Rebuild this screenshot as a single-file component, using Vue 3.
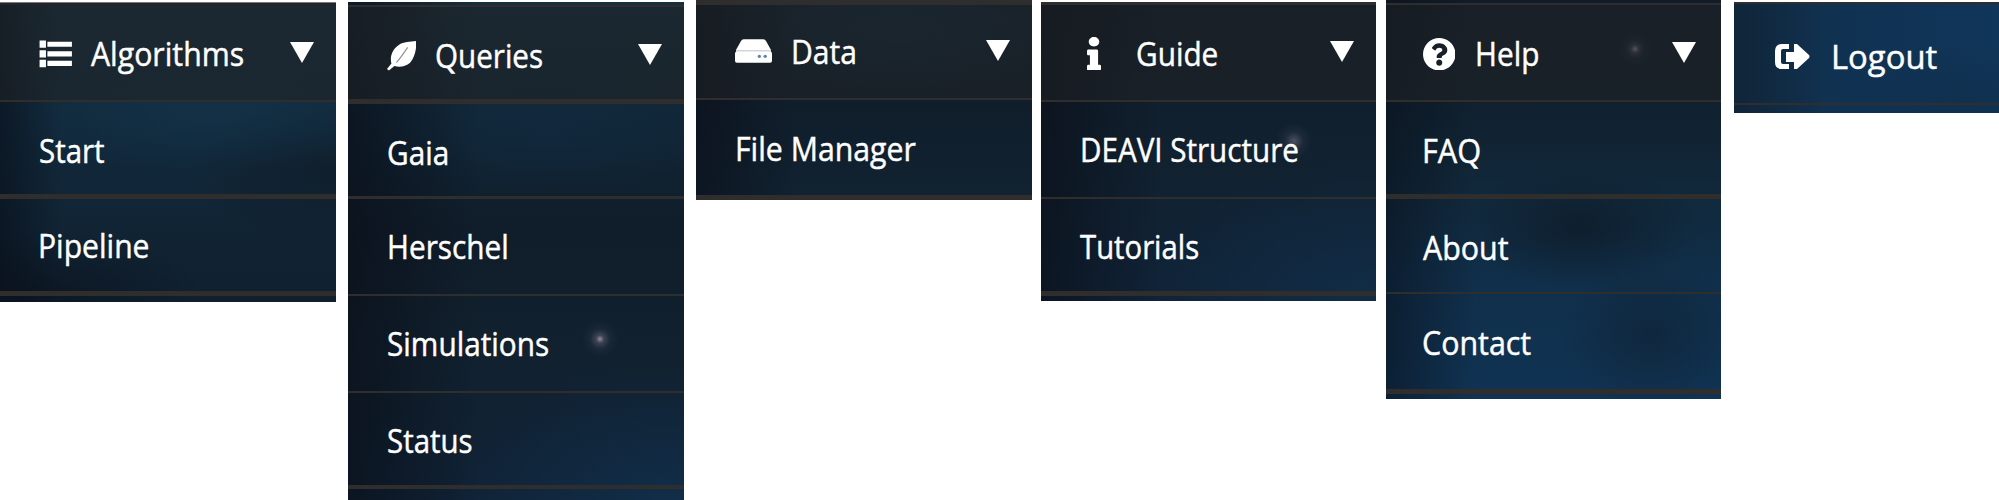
<script setup>
const BASELINE = 33.5

const menus = [
  {
    id: 'algorithms', left: 0, top: 2, width: 336, cap: 3, tail: 6, icon: 'list', iconX: 38.5, iconY: 37.5, iconW: 33, iconH: 28, arrowX: 290, arrowY: 40,
    rows: [
      { text: 'Algorithms', x: 91, base: 60.7, h: 94.5, line: 2.5, sx: 0.945 },
      { text: 'Start', x: 39, base: 60.3, h: 92, line: 5, sx: 0.92 },
      { text: 'Pipeline', x: 38.3, base: 58.5, h: 92, line: 5, sx: 0.94 }
    ]
  },
  {
    id: 'queries', left: 348, top: 2, width: 336, lead: 3, cap: 2, tail: 11, icon: 'leaf', iconX: 38.5, iconY: 39, iconW: 29.5, iconH: 29.5, arrowX: 290, arrowY: 42,
    rows: [
      { text: 'Queries', x: 87, base: 60.5, h: 92, line: 5, sx: 0.925 },
      { text: 'Gaia', x: 38.8, base: 60.3, h: 91.5, line: 3, sx: 0.93 },
      { text: 'Herschel', x: 38.5, base: 60.3, h: 94.5, line: 2.5, sx: 0.93 },
      { text: 'Simulations', x: 38.7, base: 60.3, h: 94.5, line: 2.5, sx: 0.93 },
      { text: 'Status', x: 38.8, base: 60.3, h: 92, line: 4.5, sx: 0.92 }
    ]
  },
  {
    id: 'data', left: 696, top: 0, width: 336, cap: 5, tail: 0, icon: 'disk', iconX: 39, iconY: 39, iconW: 37, iconH: 24, arrowX: 290, arrowY: 40,
    rows: [
      { text: 'Data', x: 94.8, base: 58.3, h: 92, line: 2.5, sx: 0.94 },
      { text: 'File Manager', x: 39, base: 61, h: 95, line: 5.5, sx: 0.945 }
    ]
  },
  {
    id: 'guide', left: 1041, top: 2, width: 335, cap: 2.5, tail: 5.5, icon: 'info', iconX: 46, iconY: 34.5, iconW: 14, iconH: 33.5, arrowX: 289, arrowY: 39,
    rows: [
      { text: 'Guide', x: 95, base: 60.5, h: 94.5, line: 2.5, sx: 0.93 },
      { text: 'DEAVI Structure', x: 38.9, base: 60.4, h: 94.5, line: 2.5, sx: 0.925 },
      { text: 'Tutorials', x: 39.3, base: 60.3, h: 92, line: 5, sx: 0.915 }
    ]
  },
  {
    id: 'help', left: 1386, top: 0, width: 335, lead: 3, cap: 2, tail: 5, icon: 'question', iconX: 36.5, iconY: 37.5, iconW: 32.5, iconH: 32.5, arrowX: 286, arrowY: 42,
    rows: [
      { text: 'Help', x: 88.8, base: 60.8, h: 94.5, line: 2.5, sx: 0.93 },
      { text: 'FAQ', x: 36, base: 60.8, h: 92, line: 5, sx: 0.96 },
      { text: 'About', x: 37, base: 60.4, h: 92.5, line: 2.5, sx: 0.95 },
      { text: 'Contact', x: 35.8, base: 60.2, h: 95, line: 5, sx: 0.95 }
    ]
  },
  {
    id: 'logout', left: 1734, top: 2, width: 265, cap: 2, tail: 8.5, icon: 'exit', iconX: 41, iconY: 42, iconW: 35, iconH: 25,
    rows: [{ text: 'Logout', x: 96.7, base: 64.7, h: 98, line: 2.5, sx: 1.025 }]
  }
]

const px = (n) => `${n}px`
const gapBefore = (i) => (i ? menus[i].left - menus[i - 1].left - menus[i - 1].width : 0)
</script>

<template>
  <div class="menus">
    <nav
      v-for="(m, i) in menus"
      :key="m.id"
      class="menu"
      :class="m.id"
      :style="{ width: px(m.width), marginTop: px(m.top), marginLeft: px(gapBefore(i)) }"
    >
      <div v-if="m.lead" :style="{ height: px(m.lead) }"></div>
      <div class="cap" :style="{ height: px(m.cap) }"></div>
      <div
        v-for="(r, n) in m.rows"
        :key="r.text"
        class="row"
        :class="{ head: n === 0 && m.arrowX }"
        :style="{ height: px(r.h + r.line), borderBottomWidth: px(r.line), paddingTop: px(r.base - BASELINE), paddingLeft: px(r.x) }"
      >
        <span class="label" :style="{ transform: `scaleX(${r.sx})` }">{{ r.text }}</span>
      </div>
      <div :style="{ height: px(m.tail) }"></div>

      <svg v-if="m.icon === 'list'" class="icon" :style="{ left: px(m.iconX), top: px(m.iconY) }" :width="m.iconW" :height="m.iconH" viewBox="0 0 34 29">
        <path d="M0.5 0.5h6.6v7.6h-6.6zM0.5 10.5h6.6v7.6h-6.6zM0.5 20.5h6.6v7.6h-6.6zM8.6 1.7h25.4v5.4H8.6zM8.6 11.6h25.4v5.4H8.6zM8.6 21.6h25.4v5.4H8.6z" />
      </svg>
      <svg v-else-if="m.icon === 'leaf'" class="icon" :style="{ left: px(m.iconX), top: px(m.iconY) }" :width="m.iconW" :height="m.iconH" viewBox="0 0 30 30">
        <path d="M30 0C30 9 28 17 23.5 22C19 26 13 27 7.5 25.5L2 30L0 28.5L4.5 23C2.5 15 6 8 12 4C17 0.8 24 0.8 30 0Z" />
        <path class="vein" d="M9.5 22C14 17 18 11 21 6.5" />
      </svg>
      <svg v-else-if="m.icon === 'disk'" class="icon" :style="{ left: px(m.iconX), top: px(m.iconY) }" :width="m.iconW" :height="m.iconH" viewBox="0 0 38 24">
        <path d="M9 0H29Q31 0 32 2L37 11H1L6 2Q7 0 9 0Z" />
        <path class="soft" d="M1 11H37V13H1Z" />
        <path d="M2 12.6H36Q38 12.6 38 14.5V22Q38 24 36 24H2Q0 24 0 22V14.5Q0 12.6 2 12.6Z" />
        <circle class="hole" cx="25" cy="17.5" r="1.7" /><circle class="hole" cx="31" cy="17.5" r="1.7" />
      </svg>
      <svg v-else-if="m.icon === 'info'" class="icon" :style="{ left: px(m.iconX), top: px(m.iconY) }" :width="m.iconW" :height="m.iconH" viewBox="0 0 192 512" preserveAspectRatio="none">
        <path d="M20 424.229h20V279.771H20c-11.046 0-20-8.954-20-20V212c0-11.046 8.954-20 20-20h112c11.046 0 20 8.954 20 20v212.229h20c11.046 0 20 8.954 20 20V492c0 11.046-8.954 20-20 20H20c-11.046 0-20-8.954-20-20v-47.771c0-11.046 8.954-20 20-20zM96 0C56.235 0 24 32.235 24 72s32.235 72 72 72 72-32.235 72-72S135.764 0 96 0z" />
      </svg>
      <svg v-else-if="m.icon === 'question'" class="icon" :style="{ left: px(m.iconX), top: px(m.iconY) }" :width="m.iconW" :height="m.iconH" viewBox="8 8 496 496">
        <path d="M504 256c0 136.997-111.043 248-248 248S8 392.997 8 256C8 119.083 119.043 8 256 8s248 111.083 248 248zM262.655 90c-54.497 0-89.255 22.957-116.549 63.758-3.536 5.286-2.353 12.415 2.715 16.258l34.699 26.31c5.205 3.947 12.621 3.008 16.665-2.122 17.864-22.658 30.113-35.797 57.303-35.797 20.429 0 45.698 13.148 45.698 32.958 0 14.976-12.363 22.667-32.534 33.976C247.128 238.528 216 254.941 216 296v4c0 6.627 5.373 12 12 12h56c6.627 0 12-5.373 12-12v-1.333c0-28.462 83.186-29.647 83.186-106.667 0-58.002-60.165-102-116.531-102zM256 338c-25.365 0-46 20.635-46 46 0 25.364 20.635 46 46 46s46-20.636 46-46c0-25.365-20.635-46-46-46z" />
      </svg>
      <svg v-else class="icon" :style="{ left: px(m.iconX), top: px(m.iconY) }" :width="m.iconW" :height="m.iconH" viewBox="0 0 35 25">
        <path d="M14 0V5H8Q6 5 6 7V18Q6 20 8 20H14V25H7Q0 25 0 18V7Q0 0 7 0ZM19 0H22L34 11Q35 12.5 34 14L22 25H19V18H11V8H19Z" />
      </svg>

      <svg v-if="m.arrowX" class="icon" :style="{ left: px(m.arrowX), top: px(m.arrowY) }" width="24" height="21" viewBox="0 0 24 21">
        <path d="M0 0H24L12 21Z" />
      </svg>
    </nav>
  </div>
</template>

<style>
body {
  background: #fff;
  overflow: hidden;
}
</style>

<style scoped>
.menus {
  display: flex;
  align-items: flex-start;
  width: 1999px;
  height: 500px;
  overflow: hidden;
  font-family: "Open Sans", "Noto Sans", sans-serif;
}
.menu {
  position: relative;
  flex: none;
  background-color: #10202d;
}
.cap {
  background: #2e2e2e;
}
.algorithms .cap {
  box-sizing: border-box;
  border-top: 1px solid #77797b;
  background: #222427;
}
.row {
  box-sizing: border-box;
  border-bottom: 0 solid #302e2d;
  color: #fff;
  font-size: 32px;
  line-height: 44px;
  white-space: nowrap;
  -webkit-text-stroke: 0.45px #fff;
}
.head {
  background: rgba(33, 35, 37, 0.55);
}
.label {
  display: inline-block;
  transform-origin: 0 50%;
}
.icon {
  position: absolute;
  display: block;
  fill: #fff;
}
.vein {
  fill: none;
  stroke: #8d939c;
  stroke-width: 1.2;
}
.soft {
  fill: #d3d5da;
}
.hole {
  fill: #5c83a7;
}
.algorithms {
  background-image:
    linear-gradient(90deg, rgba(8, 14, 24, 0.6), transparent 60px),
    radial-gradient(ellipse 200px 60px at 210px 110px, rgba(19, 53, 77, 0.6), transparent),
    radial-gradient(ellipse 140px 70px at 330px 170px, rgba(15, 23, 33, 0.5), transparent),
    radial-gradient(ellipse 150px 60px at 50px 290px, rgba(10, 18, 30, 0.6), transparent),
    linear-gradient(#153143, #11283a 50%, #10202f);
}
.queries {
  background-image:
    radial-gradient(circle at 252px 337px, rgba(180, 165, 180, 0.8) 0, rgba(95, 95, 112, 0.55) 4px, rgba(60, 70, 90, 0.2) 10px, transparent 18px),
    linear-gradient(90deg, rgba(10, 15, 25, 0.7), transparent 130px),
    radial-gradient(ellipse 180px 70px at 200px 120px, rgba(17, 43, 65, 0.6), transparent),
    radial-gradient(ellipse 220px 130px at 320px 495px, rgba(17, 50, 80, 0.7), transparent),
    linear-gradient(#152f40, #102434 30%, #101d2a 45%, #11212f 70%, #102236);
}
.data {
  background-image:
    linear-gradient(90deg, rgba(10, 14, 24, 0.6), transparent 100px),
    radial-gradient(ellipse 180px 70px at 200px 30px, rgba(20, 48, 70, 0.6), transparent),
    linear-gradient(#11222f, #101e2c 55%, #112230);
}
.guide {
  background-image:
    radial-gradient(circle at 253px 139px, rgba(115, 110, 125, 0.6) 0, rgba(60, 70, 90, 0.25) 9px, transparent 18px),
    linear-gradient(90deg, rgba(10, 14, 24, 0.65), transparent 120px),
    radial-gradient(ellipse 220px 130px at 320px 290px, rgba(17, 49, 78, 0.65), transparent),
    linear-gradient(#101c2a, #11212f 50%, #102338);
}
.help {
  background-image:
    radial-gradient(circle at 249px 49px, rgba(180, 170, 180, 0.8) 0, rgba(95, 95, 112, 0.5) 4px, rgba(60, 70, 90, 0.2) 9px, transparent 17px),
    linear-gradient(90deg, rgba(9, 16, 27, 0.55), transparent 90px),
    radial-gradient(ellipse 120px 60px at 195px 228px, rgba(13, 24, 36, 0.65), transparent),
    radial-gradient(ellipse 90px 75px at 265px 335px, rgba(15, 33, 50, 0.6), transparent),
    linear-gradient(#101c2a, #10202e 25%, #11293c 50%, #102f4a 70%, #103354);
}
.logout {
  background-image:
    linear-gradient(90deg, rgba(15, 32, 47, 0.65), transparent 90px),
    radial-gradient(ellipse 120px 60px at 230px 100px, rgba(16, 43, 68, 0.5), transparent),
    linear-gradient(90deg, #112f4a, #103355 60%, #10365a);
}
</style>
